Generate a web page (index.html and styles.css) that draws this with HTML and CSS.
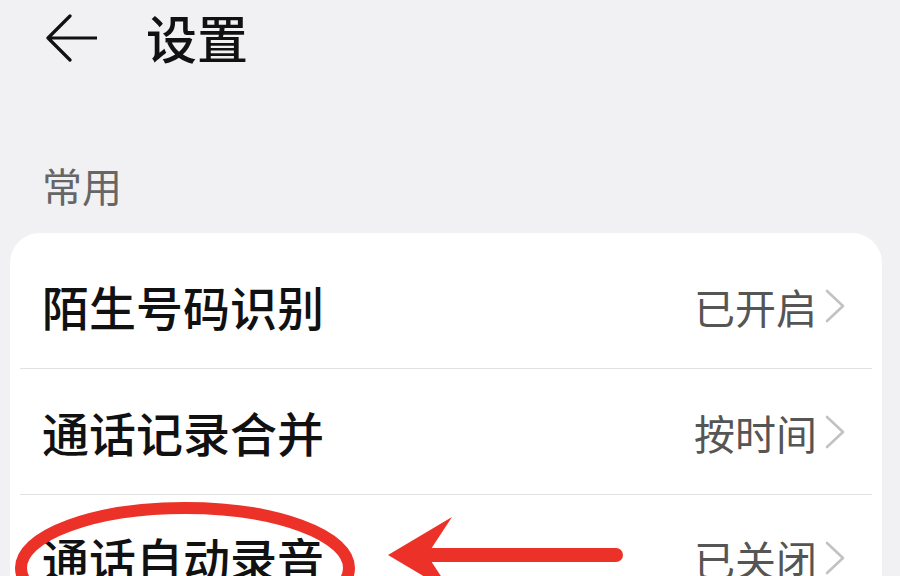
FILE: index.html
```html
<!DOCTYPE html>
<html>
<head>
    <meta charset="utf-8">
    <title>设置</title>
    <link rel="stylesheet" href="styles.css">
</head>
<body>
    <div id="page">
        <div class="header">
            <svg class="back" width="52" height="48" viewBox="0 0 52 48">
                <path d="M3 24 H52 M3 24 L25 2 M3 24 L25 46" fill="none" stroke="#111" stroke-width="3.2" stroke-linecap="round" stroke-linejoin="round"/>
            </svg>
            <div class="title">设置</div>
        </div>

        <div class="section-label">常用</div>

        <div class="card">
            <div class="row">
                <span class="row-name">陌生号码识别</span>
                <span class="row-value">已开启</span>
                <svg class="chevron" width="20" height="34" viewBox="0 0 20 34"><path d="M2 2 L18 17 L2 32" fill="none" stroke="#c2c2c2" stroke-width="2.6" stroke-linecap="round" stroke-linejoin="round"/></svg>
            </div>
            <div class="row">
                <span class="row-name">通话记录合并</span>
                <span class="row-value">按时间</span>
                <svg class="chevron" width="20" height="34" viewBox="0 0 20 34"><path d="M2 2 L18 17 L2 32" fill="none" stroke="#c2c2c2" stroke-width="2.6" stroke-linecap="round" stroke-linejoin="round"/></svg>
            </div>
            <div class="row">
                <span class="row-name">通话自动录音</span>
                <span class="row-value">已关闭</span>
                <svg class="chevron" width="20" height="34" viewBox="0 0 20 34"><path d="M2 2 L18 17 L2 32" fill="none" stroke="#c2c2c2" stroke-width="2.6" stroke-linecap="round" stroke-linejoin="round"/></svg>
            </div>
        </div>

        <!-- red marks drawn over the screenshot -->
        <svg class="marks" width="900" height="576" viewBox="0 0 900 576">
            <ellipse cx="185" cy="568" rx="164" ry="60" fill="none" stroke="#ec3128" stroke-width="12"/>
            <line x1="430" y1="555" x2="616" y2="555" stroke="#ec3128" stroke-width="14" stroke-linecap="round"/>
            <polygon points="388,555 452,517 431,549 431,561 452,593" fill="#ec3128"/>
        </svg>
    </div>
</body>
</html>
```

FILE: styles.css
```css
html, body {
    margin: 0;
    padding: 0;
}
body {
    background: #f1f1f4;
    font-family: "Noto Sans CJK SC", "Noto Sans", sans-serif;
    color: #111;
}
#page {
    position: relative;
    width: 900px;
    height: 576px;
    overflow: hidden;
}
.header {
    display: flex;
    align-items: center;
    height: 75px;
    padding-left: 45px;
}
.back {
    margin-right: 49px;
}
.title {
    font-size: 51px;
    font-weight: 500;
    line-height: 1;
}
.section-label {
    margin: 86px 0 24px 42px;
    font-size: 40px;
    line-height: 48px;
    color: #666;
}
.card {
    margin: 0 18px 0 10px;
    padding: 10px 10px 0;
    background: #fff;
    border-radius: 30px;
}
.row {
    display: flex;
    align-items: center;
    height: 125px;
    padding: 0 27px 0 22px;
    border-bottom: 1px solid #e2e2e2;
}
.row-name {
    flex: 1;
    font-size: 47px;
    font-weight: 500;
}
.row-value {
    font-size: 41px;
    color: #555;
    margin-right: 8px;
}
.marks {
    position: absolute;
    left: 0;
    top: 0;
    pointer-events: none;
}
```
